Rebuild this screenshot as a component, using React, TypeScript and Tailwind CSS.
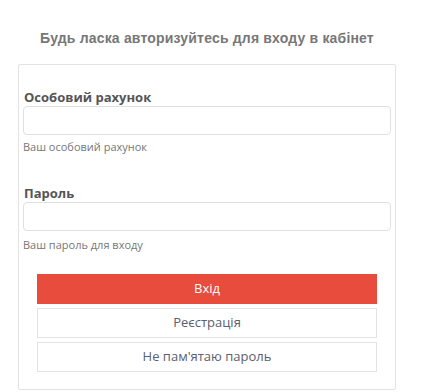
export default function App() {
  return (
    <div className="min-h-screen bg-white pt-[28px] font-['Open_Sans',_sans-serif]">
      <div className="ml-[18px] w-[378px]">
        <h3 className="text-center text-[14px] leading-[20px] tracking-[0.18px] font-bold text-[#777777] font-['Liberation_Sans',_Arial,_sans-serif]">
          Будь ласка авторизуйтесь для входу в кабінет
        </h3>

        <div className="mt-[16px] border border-[#e3e3e3] rounded-[2px] px-[4px] pt-[23px] pb-[17px]">
          {/* account */}
          <label className="block text-[13px] leading-[18px] font-bold text-[#555555] pl-[1px]">
            Особовий рахунок
          </label>
          <input
            type="text"
            className="block w-full h-[29px] border border-[#e0e0e0] rounded-[4px] outline-none px-2"
          />
          <p className="mt-[4px] text-[11px] leading-[16px] text-[#777777]">Ваш особовий рахунок</p>

          {/* password */}
          <label className="block mt-[29px] text-[13px] leading-[18px] font-bold text-[#555555] pl-[1px]">
            Пароль
          </label>
          <input
            type="password"
            className="block w-full h-[29px] border border-[#e0e0e0] rounded-[4px] outline-none px-2"
          />
          <p className="mt-[6px] text-[11px] leading-[16px] text-[#777777]">Ваш пароль для входу</p>

          <div className="mt-[21px] px-[14px] flex flex-col gap-[4px]">
            <button className="h-[30px] bg-[#e74c3c] text-white text-[13px]">Вхід</button>
            <button className="h-[30px] bg-white border border-[#e3e3e3] text-[#5a6070] text-[13px]">Реєстрація</button>
            <button className="h-[30px] bg-white border border-[#e3e3e3] text-[#5a6070] text-[13px]">Не пам'ятаю пароль</button>
          </div>
        </div>
      </div>
    </div>
  );
}
